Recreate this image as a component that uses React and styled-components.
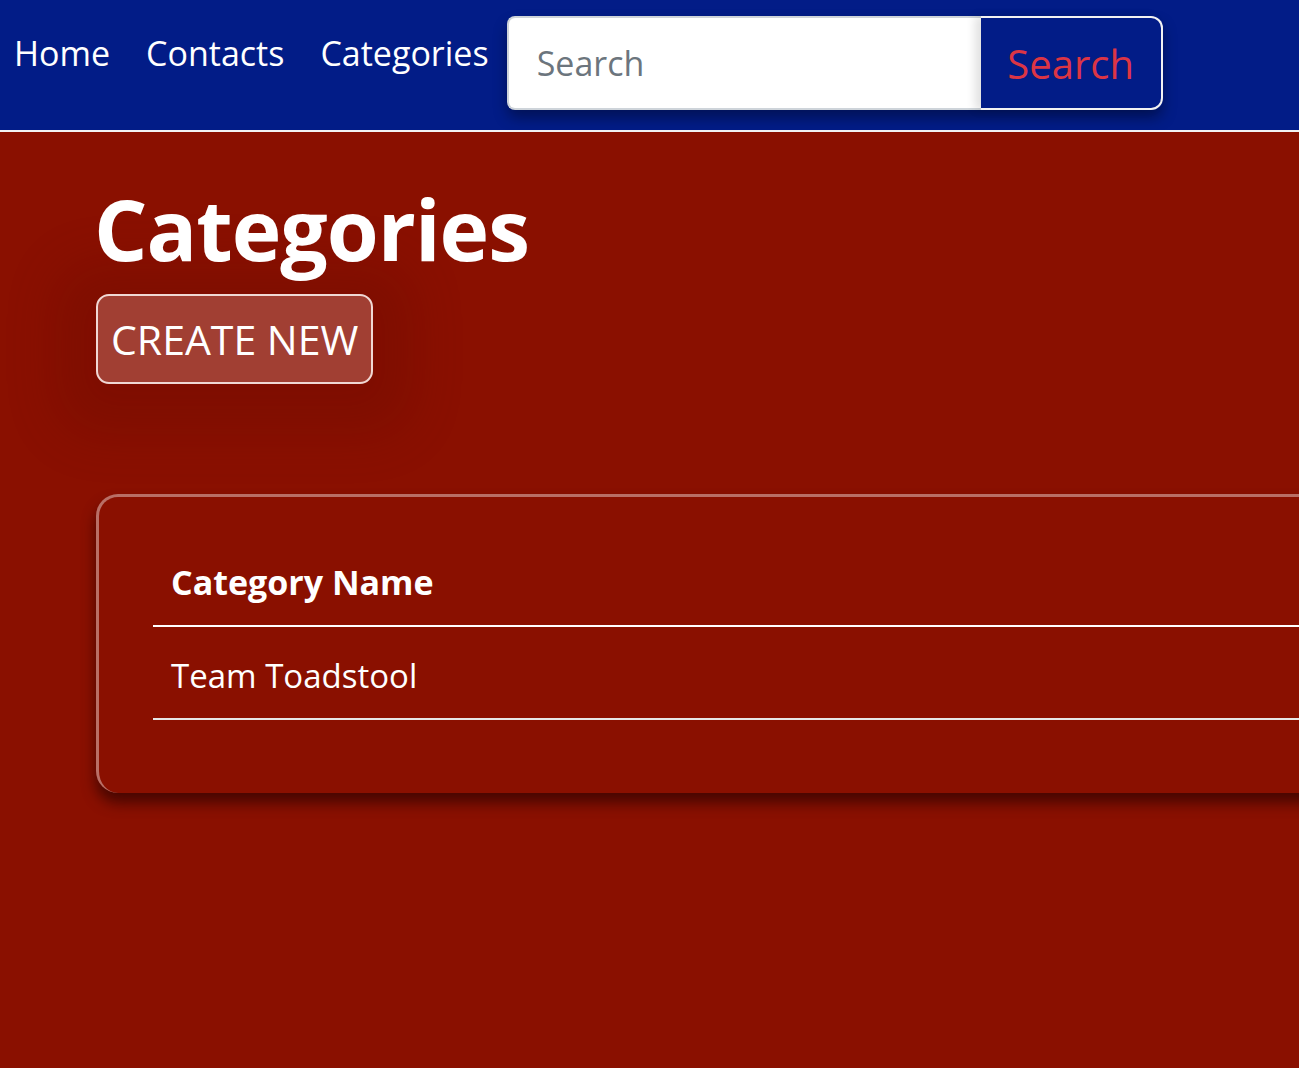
import React from "react";
import styled, { createGlobalStyle } from "styled-components";

const Global = createGlobalStyle`
  html, body { margin: 0; padding: 0; }
  body {
    background: #8a1000;
    font-family: "Open Sans", "Noto Sans", sans-serif;
    color: #fff;
    overflow-x: hidden;
    min-height: 1068px;
  }
  * { box-sizing: border-box; }
`;

const NavBar = styled.nav`
  display: flex;
  align-items: flex-start;
  height: 132px;
  background: #021c87;
  border-bottom: 2px solid #f2f2f2;
  padding: 0 0 0 14px;
`;

const NavLinks = styled.div`
  display: flex;
  gap: 36px;
  padding-top: 30px;
  margin-right: 18px;
`;

const NavLink = styled.a`
  color: #fff;
  text-decoration: none;
  font-size: 34px;
  line-height: 46px;
`;

const SearchForm = styled.form`
  display: flex;
  margin-top: 16px;
  height: 94px;
  box-shadow: 0 8px 14px rgba(0, 0, 0, 0.35);
  border-radius: 10px;
`;

const SearchInput = styled.input`
  width: 474px;
  height: 100%;
  border: 2px solid #ced4da;
  border-right: none;
  border-radius: 8px 0 0 8px;
  padding: 0 28px;
  font-family: inherit;
  font-size: 34px;
  color: #495057;
  outline: none;
  &::placeholder { color: #6c757d; }
`;

const SearchButton = styled.button`
  width: 182px;
  height: 100%;
  background: #021c87;
  border: 2px solid #f2f2f2;
  border-left: none;
  border-radius: 0 12px 12px 0;
  color: #dc3545;
  font-family: inherit;
  font-size: 40px;
  padding: 0 0 0 0;
  box-shadow: -6px 0 10px rgba(0, 0, 0, 0.12);
`;

const Main = styled.main`
  padding: 42px 0 0 96px;
`;

const Title = styled.h1`
  position: relative;
  z-index: 1;
  margin: 0 0 0 -2px;
  font-size: 84px;
  font-weight: 700;
  line-height: 110px;
  letter-spacing: -1px;
`;

const CreateButton = styled.button`
  margin-top: 10px;
  height: 90px;
  padding: 0 13px;
  background: rgba(255, 255, 255, 0.2);
  border: 2px solid #f0d8d4;
  border-radius: 13px;
  color: #fff;
  font-family: inherit;
  font-size: 41px;
  box-shadow: 0 10px 50px 40px rgba(90, 10, 0, 0.22);
`;

const Card = styled.section`
  margin-top: 110px;
  width: 1500px;
  border: 3px solid rgba(255, 255, 255, 0.4);
  border-right: none;
  border-bottom: none;
  border-radius: 22px 0 0 22px;
  padding: 40px 0 73px 54px;
  box-shadow: 0 10px 14px rgba(60, 5, 0, 0.85);
`;

const Table = styled.table`
  width: 100%;
  border-collapse: collapse;
`;

const HeadCell = styled.th`
  text-align: left;
  font-size: 34px;
  line-height: 46px;
  font-weight: 700;
  padding: 22px 18px 20px;
  border-bottom: 2px solid #fff;
`;

const Cell = styled.td`
  text-align: left;
  font-size: 33px;
  line-height: 45px;
  padding: 26px 18px 20px;
  border-bottom: 2px solid #e6e6e6;
`;

export default function App() {
  return (
    <>
      <Global />
      <NavBar>
        <NavLinks>
          <NavLink href="#">Home</NavLink>
          <NavLink href="#">Contacts</NavLink>
          <NavLink href="#">Categories</NavLink>
        </NavLinks>
        <SearchForm onSubmit={(e) => e.preventDefault()}>
          <SearchInput placeholder="Search" />
          <SearchButton type="submit">Search</SearchButton>
        </SearchForm>
      </NavBar>
      <Main>
        <Title>Categories</Title>
        <CreateButton>CREATE NEW</CreateButton>
        <Card>
          <Table>
            <thead>
              <tr>
                <HeadCell>Category Name</HeadCell>
              </tr>
            </thead>
            <tbody>
              <tr>
                <Cell>Team Toadstool</Cell>
              </tr>
            </tbody>
          </Table>
        </Card>
      </Main>
    </>
  );
}
